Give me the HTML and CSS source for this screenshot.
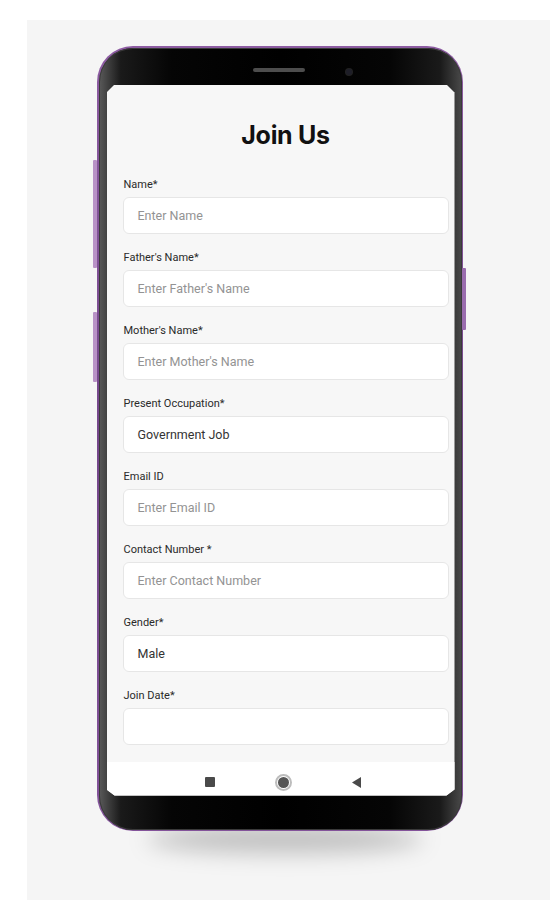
FILE: index.html
```html
<!DOCTYPE html>
<html lang="en">
<head>
<meta charset="utf-8">
<title>Join Us</title>
<link rel="stylesheet" href="styles.css">
</head>
<body>
<div class="panel">
  <div class="phone">
    <span class="btn btn-l1"></span>
    <span class="btn btn-l2"></span>
    <span class="btn btn-r"></span>
    <div class="frame">
      <div class="top-bezel">
        <span class="speaker"></span>
        <span class="camera"></span>
      </div>
      <div class="screen">
        <div class="content">
          <h1 class="title">Join Us</h1>
          <div class="field"><label class="label">Name*</label><div class="input placeholder">Enter Name</div></div>
          <div class="field"><label class="label">Father's Name*</label><div class="input placeholder">Enter Father's Name</div></div>
          <div class="field"><label class="label">Mother's Name*</label><div class="input placeholder">Enter Mother's Name</div></div>
          <div class="field"><label class="label">Present Occupation*</label><div class="input value">Government Job</div></div>
          <div class="field"><label class="label">Email ID</label><div class="input placeholder">Enter Email ID</div></div>
          <div class="field"><label class="label">Contact Number *</label><div class="input placeholder">Enter Contact Number</div></div>
          <div class="field"><label class="label">Gender*</label><div class="input value">Male</div></div>
          <div class="field"><label class="label">Join Date*</label><div class="input value"></div></div>
        </div>
        <div class="navbar">
          <span class="nav-square"></span>
          <span class="nav-home"><span class="nav-home-dot"></span></span>
          <svg class="nav-back" width="10" height="11" viewBox="0 0 10 11"><polygon points="9,0 9,11 0,5.5" fill="#4a4a4a"/></svg>
        </div>
      </div>
    </div>
  </div>
</div>
</body>
</html>
```
FILE: styles.css
```css
* { box-sizing: border-box; }
html, body { margin: 0; padding: 0; background: #ffffff; }
body { width: 550px; height: 900px; overflow: hidden; font-family: Roboto, "Liberation Sans", sans-serif; }

.panel {
  position: relative;
  z-index: 0;
  margin: 20px 0 0 27px;
  height: 880px;
  background: #f5f5f5;
  padding: 26px 0 0 70px;
}

.phone {
  position: relative;
  width: 366px;
  height: 785px;
  border-radius: 36px;
  padding: 1.5px;
  background: linear-gradient(180deg, #8d5ca2 0%, #74468a 50%, #83539a 100%);
}
.phone::after {
  content: "";
  position: absolute;
  left: 50px;
  right: 40px;
  bottom: -22px;
  height: 28px;
  border-radius: 50%;
  background: rgba(0,0,0,0.22);
  filter: blur(11px);
  z-index: -1;
}

.btn { position: absolute; width: 4px; background: #b892c6; border-radius: 1px; }
.btn-l1 { left: -4px; top: 114px; height: 108px; }
.btn-l2 { left: -4px; top: 266px; height: 70px; }
.btn-r { right: -3px; top: 222px; height: 62px; background: #9a6cae; }

.frame {
  height: 100%;
  border-radius: 34px;
  padding: 0 7px 34px 8px;
  background: linear-gradient(90deg, #5a5a5a 0%, #1a1a1a 6%, #050505 20%, #000 50%, #050505 80%, #1a1a1a 94%, #4a4a4a 100%);
  display: flex;
  flex-direction: column;
  box-shadow: inset 0 0 0 1px #3a3a3a;
}

.top-bezel {
  height: 37px;
  position: relative;
  flex: none;
}
.speaker {
  position: absolute;
  left: 146px;
  top: 20px;
  width: 52px;
  height: 4px;
  border-radius: 2px;
  background: #4d4d4d;
}
.camera {
  position: absolute;
  left: 239px;
  top: 21px;
  width: 6px;
  height: 6px;
  border-radius: 50%;
  background: #1e1e28;
  box-shadow: 0 0 0 1px #222;
}

.screen {
  flex: 1;
  background: #f7f7f7;
  display: flex;
  flex-direction: column;
  clip-path: polygon(8px 0, calc(100% - 8px) 0, 100% 8px, 100% calc(100% - 6px), calc(100% - 8px) 100%, 8px 100%, 0 calc(100% - 6px), 0 8px);
}

.content {
  flex: 1;
  padding: 33px 6px 0 16px;
  display: flex;
  flex-direction: column;
  gap: 17px;
}

.title {
  margin: 0 0 9px;
  font-family: Inter, "Liberation Sans", sans-serif;
  font-size: 25px;
  font-weight: 700;
  line-height: 34px;
  text-align: center;
  color: #111;
  letter-spacing: -0.3px;
}

.field { display: flex; flex-direction: column; gap: 5px; }
.label {
  font-size: 11px;
  line-height: 14px;
  color: #2a2a2a;
  padding-left: 1px;
}
.input {
  height: 37px;
  background: #fff;
  border: 1px solid #e6e6e6;
  border-radius: 6px;
  padding: 0 14px;
  display: flex;
  align-items: center;
  font-size: 12.5px;
}
.placeholder { color: #939393; }
.value { color: #333; }

.navbar {
  flex: none;
  height: 34px;
  margin-top: 16px;
  background: #ffffff;
  display: flex;
  align-items: center;
  justify-content: center;
  gap: 60px;
  padding: 7px 10px 0 16px;
}
.nav-square {
  width: 10px;
  height: 10px;
  background: #4a4a4a;
  border-radius: 1px;
}
.nav-home {
  width: 17px;
  height: 17px;
  border-radius: 50%;
  border: 2px solid #bdbdbd;
  display: flex;
  align-items: center;
  justify-content: center;
}
.nav-home-dot {
  width: 11px;
  height: 11px;
  border-radius: 50%;
  background: #555;
}
.nav-back { display: block; }
```
